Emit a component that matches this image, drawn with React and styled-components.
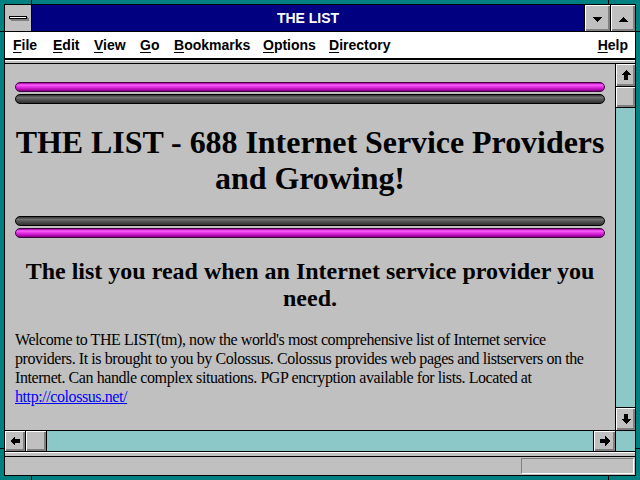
import styled, { createGlobalStyle } from "styled-components";

const SANS = `"Liberation Sans", Arial, sans-serif`;
const SERIF = `"Liberation Serif", "Times New Roman", serif`;

const GlobalStyle = createGlobalStyle`
  html, body {
    margin: 0;
    padding: 0;
    width: 640px;
    height: 480px;
    overflow: hidden;
  }
`;

// teal frame, with the little resize-corner marks drawn into the border
const Frame = styled.div`
  width: 640px;
  height: 480px;
  box-sizing: border-box;
  padding: 4px;
  background:
    linear-gradient(#000, #000) 31px 0 / 1px 100% no-repeat,
    linear-gradient(#000, #000) 608px 0 / 1px 100% no-repeat,
    linear-gradient(#000, #000) 0 31px / 100% 1px no-repeat,
    linear-gradient(#000, #000) 0 448px / 100% 1px no-repeat,
    #008080;
`;
const Window = styled.div`
  height: 100%;
  border: 1px solid #000;
  box-sizing: border-box;
  display: flex;
  flex-direction: column;
  background: #c0c0c0;
`;

const TitleBar = styled.div`
  height: 26px;
  flex: none;
  display: flex;
  border-bottom: 1px solid #000;
`;
const SysBox = styled.div`
  width: 26px;
  border-right: 1px solid #000;
  background: #c0c0c0;
  display: flex;
  align-items: center;
  justify-content: center;
`;
const SysBar = styled.div`
  width: 16px;
  height: 1px;
  margin: 0 1px 1px 0;
  border: 1px solid #000;
  background: #fff;
  box-shadow: 1px 1px 0 #808080, 2px 2px 0 #808080;
`;
const Caption = styled.div`
  flex: 1;
  background: #000080;
  color: #fff;
  font: bold 14px ${SANS};
  display: flex;
  align-items: center;
  justify-content: center;
`;
const Bevel = `
  background: #c0c0c0;
  box-shadow: inset 1px 1px 0 #fff, inset -1px -1px 0 #808080, inset -2px -2px 0 #808080;
  display: flex;
  align-items: center;
  justify-content: center;
`;
const CapButton = styled.div`
  width: ${p => p.$w}px;
  border-left: 1px solid #000;
  ${Bevel}
`;

const MenuBar = styled.div`
  height: 26px;
  flex: none;
  background: #fff;
  border-bottom: 2px solid #000;
  display: flex;
  align-items: center;
  padding: 0 7px 0 8px;
  font: bold 14px ${SANS};
  color: #000;
`;
const MenuItem = styled.span`
  flex: none;
  width: ${p => (p.$w ? `${p.$w}px` : "auto")};
  margin-left: ${p => (p.$right ? "auto" : "0")};
  & u { text-underline-offset: 2px; }
`;
const Band = styled.div`
  height: 2px;
  flex: none;
  border-top: 1px solid #fff;
  border-bottom: 1px solid #000;
  background: #c0c0c0;
`;

const Body = styled.div`
  display: grid;
  grid-template-columns: 610px 20px;
  grid-template-rows: 366px 22px;
  flex: none;
`;
const Doc = styled.div`
  background: #c0c0c0;
  padding: 18px 10px 0;
  overflow: hidden;
  font-family: ${SERIF};
  color: #000;
`;
const Dither = `
  background: #8cc8c8;
`;
const VScroll = styled.div`
  border-left: 1px solid #000;
  display: flex;
  flex-direction: column;
  ${Dither}
`;
const ScrollBtn = styled.div`
  flex: none;
  height: ${p => p.$h}px;
  width: ${p => p.$w}px;
  ${p => p.$edge}: 1px solid #000;
  ${Bevel}
`;
const Track = styled.div`
  flex: 1;
`;
const HScroll = styled.div`
  border-top: 1px solid #000;
  border-bottom: 1px solid #000;
  display: flex;
  ${Dither}
`;
const Corner = styled.div`
  border-top: 1px solid #000;
  border-bottom: 1px solid #000;
  border-left: 1px solid #000;
  ${Dither}
`;

const Separator = styled.div`
  height: 3px;
  flex: none;
  border-top: 1px solid #fff;
  border-bottom: 1px solid #000;
`;
const StatusBar = styled.div`
  flex: 1;
  display: flex;
  justify-content: flex-end;
  align-items: center;
  padding-right: 1px;
`;
const StatusBox = styled.div`
  width: 111px;
  height: 14px;
  border-top: 1px solid #808080;
  border-left: 1px solid #808080;
  border-bottom: 1px solid #fff;
  border-right: 1px solid #fff;
`;

const RulePair = styled.div`
  display: flex;
  flex-direction: column;
  gap: 2px;
`;
const RuleBar = styled.div`
  height: 8px;
  border-radius: 5px;
  border: 1px solid ${p => (p.$tone === "pink" ? "#400040" : "#000")};
  background: ${p =>
    p.$tone === "pink"
      ? "linear-gradient(#a000a0 0, #ff60ff 25%, #e030e0 50%, #c010c0 75%, #800080 100%)"
      : "linear-gradient(#303030 0, #707070 30%, #505050 60%, #303030 100%)"};
`;
const Heading = styled.h1`
  margin: 20px 0;
  font: bold 32px/36px ${SERIF};
  letter-spacing: -0.05px;
  white-space: nowrap;
  text-align: center;
`;
const SubHeading = styled.h2`
  margin: 20px 0 18px;
  font: bold 24px/27px ${SERIF};
  text-align: center;
`;
const Para = styled.p`
  margin: 0;
  font: 16px/19px ${SERIF};
  letter-spacing: -0.42px;
`;
const Link = styled.a`
  color: #0000ff;
  text-decoration: underline;
`;

function Arrow({ dir }) {
  const rot = { up: 0, right: 90, down: 180, left: 270 }[dir];
  return (
    <svg width="10" height="10" viewBox="0 0 10 10" shapeRendering="crispEdges"
      style={{ transform: `rotate(${rot}deg)` }}>
      <polygon points="5,0 10,5 7,5 7,10 3,10 3,5 0,5" fill="#000" />
    </svg>
  );
}

function Tri({ down }) {
  return (
    <svg width="9" height="5" viewBox="0 0 9 5" shapeRendering="crispEdges" style={{ marginTop: 2 }}>
      <polygon points={down ? "0,0 9,0 4.5,5" : "0,5 9,5 4.5,0"} fill="#000" />
    </svg>
  );
}

// widths taken from where each menu title starts in the bar
const menus = [
  ["File", 40], ["Edit", 41], ["View", 46], ["Go", 34],
  ["Bookmarks", 89], ["Options", 66], ["Directory", 0],
];

export default function App() {
  return (
    <Frame>
      <GlobalStyle />
      <Window>
        <TitleBar>
          <SysBox><SysBar /></SysBox>
          <Caption>THE LIST</Caption>
          <CapButton $w={25}><Tri down /></CapButton>
          <CapButton $w={24}><Tri /></CapButton>
        </TitleBar>
        <MenuBar>
          {menus.map(([m, w]) => (
            <MenuItem key={m} $w={w}><u>{m[0]}</u>{m.slice(1)}</MenuItem>
          ))}
          <MenuItem $right><u>H</u>elp</MenuItem>
        </MenuBar>
        <Band />
        <Body>
          <Doc>
            <RulePair>
              <RuleBar $tone="pink" />
              <RuleBar $tone="dark" />
            </RulePair>
            <Heading>THE LIST - 688 Internet Service Providers<br />and Growing!</Heading>
            <RulePair>
              <RuleBar $tone="dark" />
              <RuleBar $tone="pink" />
            </RulePair>
            <SubHeading>The list you read when an Internet service provider you need.</SubHeading>
            <Para>
              Welcome to THE LIST(tm), now the world's most comprehensive list of Internet service
              providers. It is brought to you by Colossus. Colossus provides web pages and listservers
              on the Internet. Can handle complex situations. PGP encryption available for lists.
              Located at <Link href="#">http://colossus.net/</Link>
            </Para>
          </Doc>
          <VScroll>
            <ScrollBtn $h={22} $edge="border-bottom"><Arrow dir="up" /></ScrollBtn>
            <ScrollBtn $h={20} $edge="border-bottom" />
            <Track />
            <ScrollBtn $h={22} $edge="border-top"><Arrow dir="down" /></ScrollBtn>
          </VScroll>
          <HScroll>
            <ScrollBtn $w={20} $edge="border-right"><Arrow dir="left" /></ScrollBtn>
            <ScrollBtn $w={20} $edge="border-right" />
            <Track />
            <ScrollBtn $w={21} $edge="border-left"><Arrow dir="right" /></ScrollBtn>
          </HScroll>
          <Corner />
        </Body>
        <Separator />
        <StatusBar>
          <StatusBox />
        </StatusBar>
      </Window>
    </Frame>
  );
}
